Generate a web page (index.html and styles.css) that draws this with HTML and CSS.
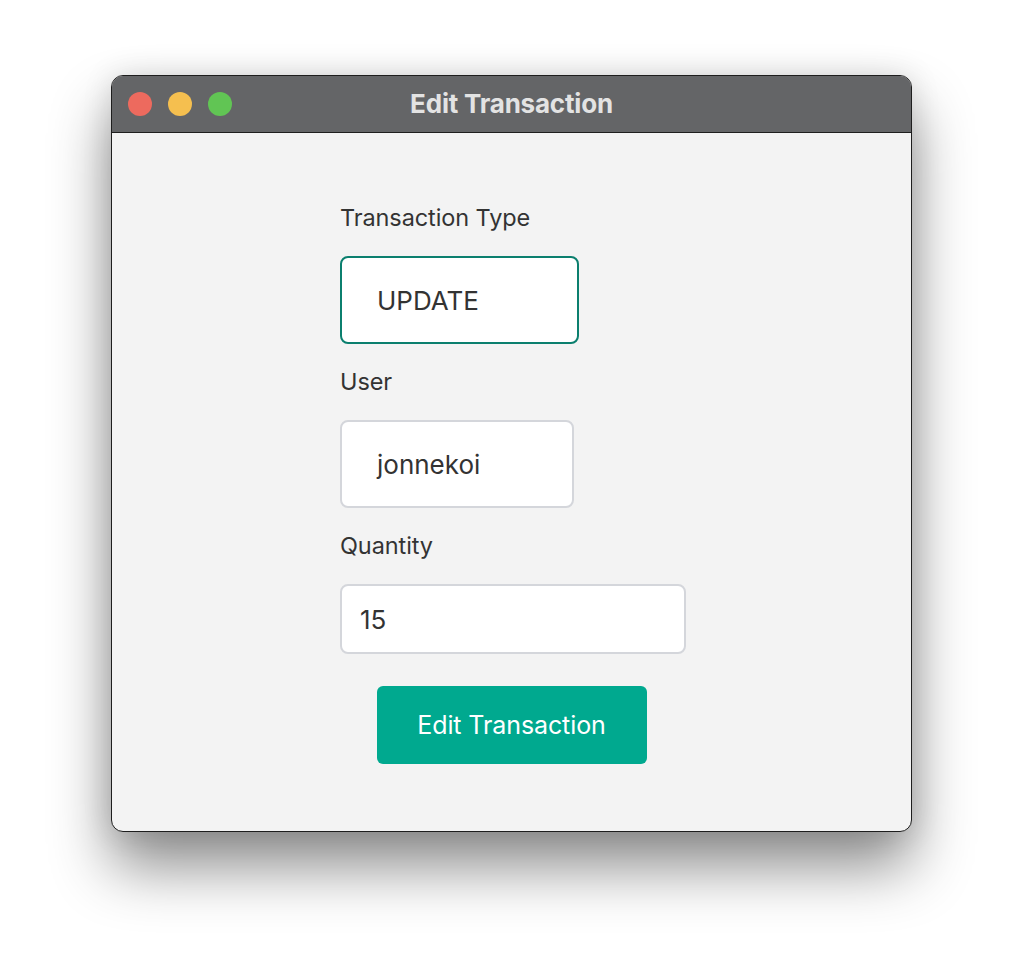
FILE: index.html
```html
<!DOCTYPE html>
<html>
<head>
<meta charset="utf-8">
<title>Edit Transaction</title>
<link rel="stylesheet" href="styles.css">
</head>
<body>
<div class="window">
  <div class="titlebar">
    <div class="lights">
      <span class="light red"></span>
      <span class="light yellow"></span>
      <span class="light green"></span>
    </div>
    <div class="title">Edit Transaction</div>
  </div>
  <div class="content">
    <div class="form">
      <div class="label">Transaction Type</div>
      <div class="field field-type focused">UPDATE</div>
      <div class="label">User</div>
      <div class="field field-user">jonnekoi</div>
      <div class="label">Quantity</div>
      <div class="field field-qty">15</div>
    </div>
    <div class="actions">
      <button class="btn">Edit Transaction</button>
    </div>
  </div>
</div>
</body>
</html>
```

FILE: styles.css
```css
html, body {
  margin: 0;
  padding: 0;
  background: #ffffff;
}
body {
  width: 1024px;
  height: 980px;
  overflow: hidden;
  font-family: Inter, "Liberation Sans", sans-serif;
}
.window {
  margin: 75px 0 0 111px;
  width: 801px;
  height: 757px;
  box-sizing: border-box;
  border: 1px solid #1e1e1e;
  border-radius: 12px;
  background: #f3f3f3;
  overflow: hidden;
  box-shadow: 0 35px 60px rgba(0, 0, 0, 0.45), 0 0 30px rgba(0, 0, 0, 0.12);
  display: flex;
  flex-direction: column;
}
.titlebar {
  height: 56px;
  flex: none;
  background: #646567;
  border-bottom: 1px solid #1e1e1e;
  display: flex;
  align-items: center;
  position: relative;
}
.lights {
  display: flex;
  gap: 16px;
  padding-left: 16px;
}
.light {
  width: 24px;
  height: 24px;
  border-radius: 50%;
  display: block;
}
.red { background: #ed6a5e; }
.yellow { background: #f5bf4f; }
.green { background: #61c554; }
.title {
  position: absolute;
  left: 0;
  right: 0;
  top: 0;
  bottom: 2px;
  display: flex;
  align-items: center;
  justify-content: center;
  color: #e3e3e3;
  font-weight: 700;
  font-size: 26px;
  letter-spacing: -0.2px;
}
.content {
  flex: 1;
  padding-top: 71px;
  display: flex;
  flex-direction: column;
}
.form {
  margin-left: 228px;
  display: flex;
  flex-direction: column;
  align-items: flex-start;
}
.label {
  font-size: 23.5px;
  line-height: 28px;
  color: #333333;
  margin-bottom: 24px;
  letter-spacing: -0.1px;
}
.field {
  box-sizing: border-box;
  background: #ffffff;
  border: 2px solid #d4d6db;
  border-radius: 8px;
  color: #333333;
  font-size: 26px;
  display: flex;
  align-items: center;
  margin-bottom: 24px;
}
.field-type {
  width: 239px;
  height: 88px;
  padding-left: 35px;
}
.focused {
  border-color: #0b7f6e;
}
.field-user {
  width: 234px;
  height: 88px;
  padding-left: 35px;
}
.field-qty {
  width: 346px;
  height: 70px;
  padding-left: 18px;
  margin-bottom: 32px;
}
.actions {
  display: flex;
  justify-content: center;
}
.btn {
  width: 270px;
  height: 78px;
  border: none;
  border-radius: 6px;
  background: #00a98f;
  color: #ffffff;
  font-family: Inter, "Liberation Sans", sans-serif;
  font-size: 25px;
  letter-spacing: -0.1px;
  padding: 0;
}
```
